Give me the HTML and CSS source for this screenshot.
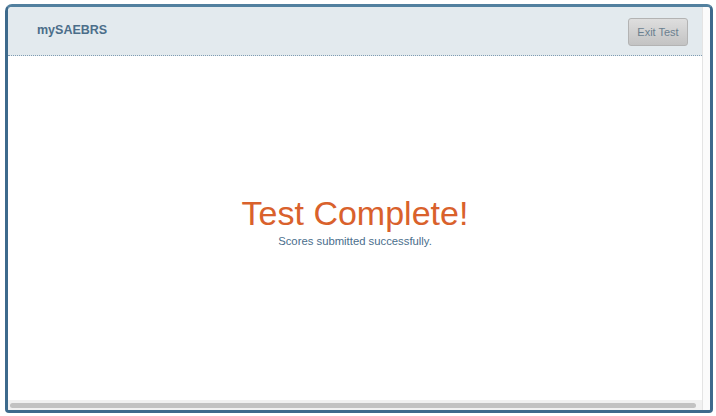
FILE: index.html
```html
<!DOCTYPE html>
<html>
<head>
<meta charset="utf-8">
<link rel="stylesheet" href="styles.css">
</head>
<body>
<div class="frame">
  <div class="main">
    <header class="header">
      <div class="brand">mySAEBRS</div>
      <button class="exit">Exit Test</button>
    </header>
    <section class="content">
      <h1 class="title">Test Complete!</h1>
      <p class="sub">Scores submitted successfully.</p>
    </section>
    <div class="hscroll"><div class="thumb"></div></div>
  </div>
  <div class="vscroll"></div>
</div>
</body>
</html>
```
FILE: styles.css
```css
html, body {
  margin: 0;
  padding: 0;
  background: #ffffff;
  font-family: "Liberation Sans", Arial, sans-serif;
}
body {
  padding: 4px 3px 3px 5px;
  width: 716px;
  height: 416px;
  box-sizing: border-box;
}
.frame {
  width: 708px;
  height: 409px;
  box-sizing: border-box;
  border: 3px solid #3d6a8c;
  border-top-color: #52809f;
  border-radius: 7px 6px 4px 4px;
  display: flex;
  overflow: hidden;
  background: #ffffff;
}
.main {
  flex: 1;
  display: flex;
  flex-direction: column;
  min-width: 0;
}
.header {
  height: 49px;
  box-sizing: border-box;
  background: #e3eaee;
  border-bottom: 1px dotted #7f9db3;
  display: flex;
  align-items: center;
  justify-content: space-between;
  padding: 0 14px 0 29px;
}
.brand {
  font-weight: bold;
  font-size: 12.5px;
  color: #4b6e8a;
  margin-top: -2px;
}
.exit {
  width: 60px;
  height: 28px;
  box-sizing: border-box;
  border: 1px solid #b3b3b3;
  border-radius: 3px;
  background: linear-gradient(#dedede, #c3c3c3);
  font-family: "Liberation Sans", Arial, sans-serif;
  font-size: 11px;
  color: #6b7f8f;
  padding: 0;
  margin-top: 2px;
}
.content {
  flex: 1;
  display: flex;
  flex-direction: column;
  align-items: center;
  justify-content: center;
  padding-bottom: 12px;
}
.title {
  margin: 0;
  font-weight: normal;
  font-size: 34px;
  line-height: 34px;
  color: #d9612c;
}
.sub {
  margin: 5px 0 0;
  font-size: 11.3px;
  line-height: 13px;
  color: #4a6e8c;
}
.hscroll {
  height: 10px;
  background: #f1f1f1;
  display: flex;
  align-items: center;
  padding: 0 6px 0 2px;
}
.thumb {
  flex: 1;
  height: 5px;
  border-radius: 3px;
  background: #c2c2c2;
}
.vscroll {
  width: 7px;
  border-left: 1px solid #e4e4e4;
  background: #fbfbfb;
}
```
